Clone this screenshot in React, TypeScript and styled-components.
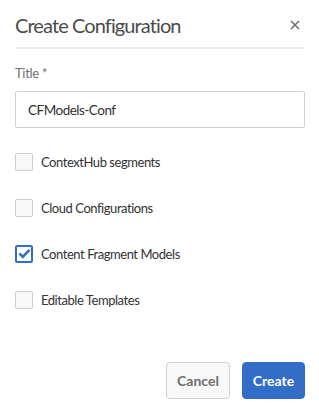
import React from "react";
import styled, { createGlobalStyle } from "styled-components";

const Global = createGlobalStyle`
  html, body { margin: 0; padding: 0; background: #fff; }
  body { font-family: "Lato", "Open Sans", sans-serif; }
`;

const Dialog = styled.div`
  width: 319px;
  height: 414px;
  box-sizing: border-box;
  background: #fff;
  display: flex;
  flex-direction: column;
  padding: 0 14px 0 15px;
`;

const Header = styled.div`
  display: flex;
  align-items: center;
  justify-content: space-between;
  height: 49px;
  border-bottom: 2px solid #ececec;
  box-sizing: border-box;
  padding-top: 2px;
`;

const Heading = styled.h1`
  margin: 0;
  font-size: 20px;
  font-weight: 400;
  color: #4b4b4b;
  letter-spacing: -0.9px;
`;

const Close = styled.button`
  border: none;
  background: none;
  padding: 0;
  margin-right: 3px;
  width: 14px;
  height: 14px;
  display: flex;
  align-items: center;
  justify-content: center;
`;

const Field = styled.div`
  display: flex;
  flex-direction: column;
  margin-top: 16px;
`;

const Label = styled.label`
  font-size: 13px;
  color: #6e6e6e;
  line-height: 16px;
  margin-bottom: 10px;
  letter-spacing: -0.3px;
`;

const Input = styled.div`
  height: 37px;
  box-sizing: border-box;
  border: 1px solid #d0d0d0;
  border-radius: 2px;
  padding: 0 12px;
  display: flex;
  align-items: center;
  font-size: 13.5px;
  letter-spacing: -0.5px;
  color: #323232;
`;

const Options = styled.div`
  display: flex;
  flex-direction: column;
  gap: 27px;
  margin-top: 24px;
`;

const Option = styled.div`
  display: flex;
  align-items: center;
  gap: 8px;
  height: 19px;
`;

const Box = styled.span<{ $checked?: boolean }>`
  width: 18px;
  height: 18px;
  box-sizing: border-box;
  border-radius: 2px;
  border: ${(p) => (p.$checked ? "2px solid #326ec8" : "1px solid #cdcdcd")};
  background: ${(p) => (p.$checked ? "#fff" : "#f8f8f8")};
  display: flex;
  align-items: center;
  justify-content: center;
`;

const OptionText = styled.span`
  font-size: 13px;
  letter-spacing: -0.45px;
  color: #323232;
`;

const Footer = styled.div`
  margin-top: auto;
  margin-bottom: 15px;
  display: flex;
  justify-content: flex-end;
  gap: 12px;
`;

const Button = styled.button<{ $primary?: boolean }>`
  height: 37px;
  padding: 0;
  border-radius: 4px;
  font-family: inherit;
  font-size: 14px;
  font-weight: 700;
  border: 1px solid ${(p) => (p.$primary ? "#326ec8" : "#d0d0d0")};
  background: ${(p) => (p.$primary ? "#326ec8" : "#f8f8f8")};
  color: ${(p) => (p.$primary ? "#fff" : "#6e6e6e")};
  width: ${(p) => (p.$primary ? "63px" : "64px")};
`;

const options = [
  { label: "ContextHub segments", checked: false },
  { label: "Cloud Configurations", checked: false },
  { label: "Content Fragment Models", checked: true },
  { label: "Editable Templates", checked: false },
];

export default function App() {
  return (
    <>
      <Global />
      <Dialog>
        <Header>
          <Heading>Create Configuration</Heading>
          <Close aria-label="Close">
            <svg width="10" height="10" viewBox="0 0 10 10">
              <path d="M1 1L9 9M9 1L1 9" stroke="#707070" strokeWidth="1.6" />
            </svg>
          </Close>
        </Header>
        <Field>
          <Label>Title *</Label>
          <Input>CFModels-Conf</Input>
        </Field>
        <Options>
          {options.map((o) => (
            <Option key={o.label}>
              <Box $checked={o.checked}>
                {o.checked && (
                  <svg width="13" height="11" viewBox="0 0 13 11">
                    <path d="M1.5 5.5L4.8 8.8L11.5 1.8" fill="none" stroke="#326ec8" strokeWidth="2.6" />
                  </svg>
                )}
              </Box>
              <OptionText>{o.label}</OptionText>
            </Option>
          ))}
        </Options>
        <Footer>
          <Button>Cancel</Button>
          <Button $primary>Create</Button>
        </Footer>
      </Dialog>
    </>
  );
}
